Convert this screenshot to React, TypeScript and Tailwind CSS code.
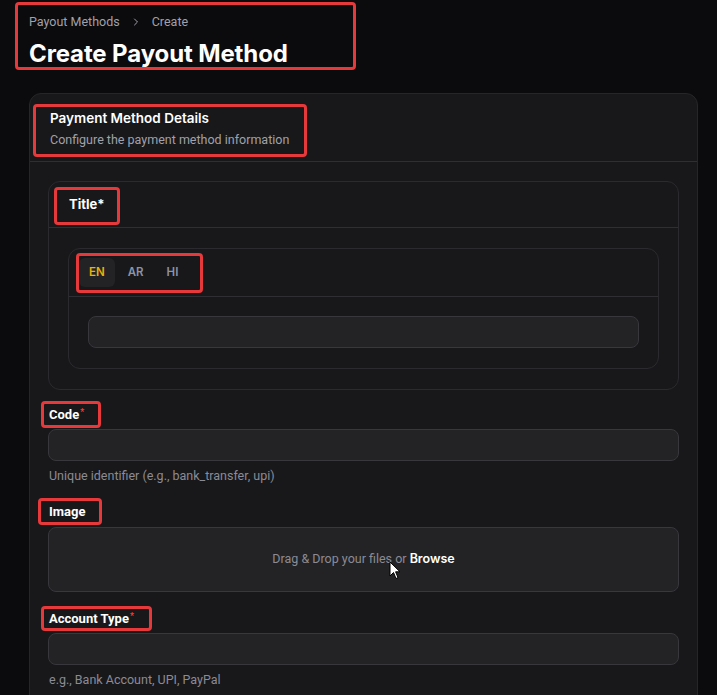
import React from "react";

const muted = "font-['Roboto',sans-serif]";

const Mark = ({ className }: { className: string }) => (
  <div
    className={`pointer-events-none absolute rounded-[4px] border-[3px] border-[#e5393b] ${className}`}
  />
);

const Field = ({
  label,
  required,
  hint,
  className = "",
  children,
}: {
  label: string;
  required?: boolean;
  hint?: string;
  className?: string;
  children: React.ReactNode;
}) => (
  <div className={`flex flex-col ${className}`}>
    <label className={`pl-px text-[13px] font-bold leading-5 text-white ${muted}`}>
      {label}
      {required && (
        <sup className="ml-[1px] text-[9px] font-medium text-[#ef4444]">*</sup>
      )}
    </label>
    {children}
    {hint && (
      <p className={`mt-[5px] pl-px text-[12.5px] leading-5 text-[#8b8b95] ${muted}`}>{hint}</p>
    )}
  </div>
);

const Input = () => (
  <div className="h-8 w-full rounded-lg border border-[#37373c] bg-[#232326]" />
);

export default function App() {
  return (
    <div
      className="relative min-h-[695px] overflow-hidden bg-[#0b0b0d] pl-[29px] pr-[19px]"
      style={{ fontFamily: "Inter, 'Noto Sans', sans-serif" }}
    >
      {/* page header */}
      <div className="pt-[12px]">
        <nav className={`flex items-center gap-[10px] text-[12.5px] leading-5 text-[#a1a1aa] ${muted}`}>
          <span>Payout Methods</span>
          <svg width="12" height="12" viewBox="0 0 24 24" fill="none" stroke="currentColor" strokeWidth="2" strokeLinecap="round" strokeLinejoin="round">
            <path d="m9 18 6-6-6-6" />
          </svg>
          <span>Create</span>
        </nav>
        <h1 className="mt-[6px] text-[24px] font-bold leading-8 tracking-[-0.005em] text-white">
          Create Payout Method
        </h1>
      </div>

      {/* card */}
      <div className="mt-[23px] rounded-xl border border-[#26262a] bg-[#18181b]">
        <div className="border-b border-[#2e2e33] px-5 pb-[11px] pt-3.5">
          <h2 className="text-[13.5px] font-semibold leading-5 text-white">
            Payment Method Details
          </h2>
          <p className={`mt-[2px] text-[12.5px] leading-5 text-[#a1a1aa] ${muted}`}>
            Configure the payment method information
          </p>
        </div>

        <div className="flex flex-col px-[18px] pt-[19px]">
          {/* Title translations */}
          <div className="rounded-xl border border-[#2a2a2f] bg-[#18181b]">
            <div className="flex h-[46px] items-center border-b border-[#2e2e33] px-5">
              <span className="text-[13px] font-bold text-white">Title*</span>
            </div>
            <div className="px-[19px] py-5">
              <div className="rounded-xl border border-[#2a2a2f]">
                <div className="flex items-center gap-[3px] border-b border-[#2e2e33] px-[10px] py-[9px]">
                  <button className="h-[29px] rounded-md bg-[#232326] px-[10px] text-[11.5px] font-semibold text-[#eab308]">
                    EN
                  </button>
                  <button className="h-[29px] px-[10px] text-[11.5px] font-semibold text-[#8b93a7]">
                    AR
                  </button>
                  <button className="h-[29px] px-[10px] text-[11.5px] font-semibold text-[#8b93a7]">
                    HI
                  </button>
                </div>
                <div className="px-[19px] pb-5 pt-[19px]">
                  <Input />
                </div>
              </div>
            </div>
          </div>

          <Field className="mt-[15px]" label="Code" required hint="Unique identifier (e.g., bank_transfer, upi)">
            <div className="mt-1">
              <Input />
            </div>
          </Field>

          <Field className="mt-4" label="Image">
            <div className={`mt-[5px] flex h-[65px] items-center justify-center rounded-lg border border-[#37373c] bg-[#232326] text-[12.5px] text-[#8b8b95] ${muted}`}>
              Drag &amp; Drop your files or&nbsp;
              <span className="font-['Inter',sans-serif] font-semibold text-white">Browse</span>
            </div>
          </Field>

          <Field className="mt-[17px]" label="Account Type" required hint="e.g., Bank Account, UPI, PayPal">
            <div className="mt-1">
              <Input />
            </div>
          </Field>
        </div>
        <div className="h-10" />
      </div>

      {/* annotations */}
      <Mark className="left-[15px] top-[2px] h-[68px] w-[341px]" />
      <Mark className="left-[33px] top-[104px] h-[53px] w-[274px]" />
      <Mark className="left-[54px] top-[187px] h-[38px] w-[66px]" />
      <Mark className="left-[76px] top-[253px] h-[40px] w-[127px]" />
      <Mark className="left-[41px] top-[401px] h-[27px] w-[60px]" />
      <Mark className="left-[38px] top-[498px] h-[27px] w-[64px]" />
      <Mark className="left-[41px] top-[606px] h-[25px] w-[111px]" />

      {/* cursor */}
      <svg className="pointer-events-none absolute left-[389px] top-[561px]" width="12" height="19" viewBox="0 0 12 19">
        <path d="M1 1 L1 15 L4.5 11.5 L7 17.5 L9 16.6 L6.6 10.8 L11 10.8 Z" fill="#fff" stroke="#000" strokeWidth="1" strokeLinejoin="round" />
      </svg>
    </div>
  );
}
